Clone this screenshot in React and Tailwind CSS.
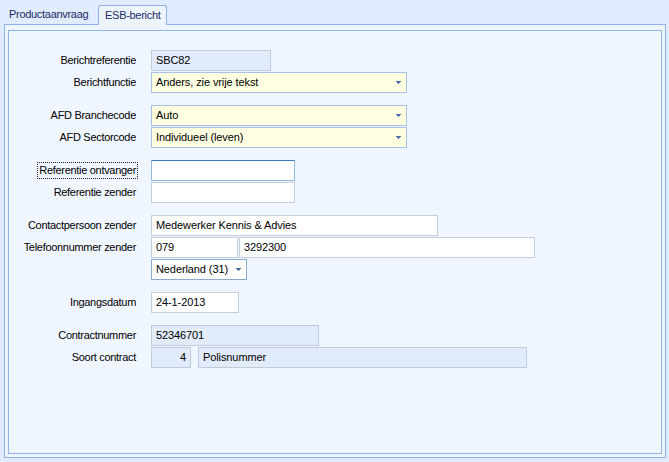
import React from 'react';

const font = { fontFamily: '"Liberation Sans", Arial, sans-serif' };

// small blue dropdown triangle
const Arrow = () => (
  <svg width="5" height="4" viewBox="0 0 5 4" className="shrink-0">
    <path d="M0 0h5v1H0zM1 1h3v1H1zM2 2h1v1H2z" fill="#4c6cab" />
  </svg>
);

const Field = ({ w, kind = 'normal', children, right = false }) => {
  const styles = {
    normal: 'bg-white border-[#c5ced9]',
    focus: 'bg-white border-[#93b8e2] border-t-[#3e78b6]',
    readonly: 'bg-[#e1ebfb] border-[#c2ccd8]',
    combo: 'bg-[#ffffe1] border-[#a9c1e6]',
    combo2: 'bg-white border-[#8ea9cf]',
  };
  const isCombo = kind === 'combo' || kind === 'combo2';
  return (
    <div
      className={`h-[21px] border flex items-center px-[4px] text-[11px] tracking-[-0.1px] text-black whitespace-nowrap ${styles[kind]} ${
        right ? 'justify-end' : ''
      } ${isCombo ? 'justify-between pr-[5px]' : ''}`}
      style={{ width: w }}
    >
      <span>{children}</span>
      {isCombo && <Arrow />}
    </div>
  );
};

const Row = ({ label, children, gap = false, dotted = false }) => (
  <div className={`flex items-center ${gap ? 'mt-[12px]' : 'mt-[1px]'}`}>
    <div className="w-[129px] flex justify-end text-[11px] text-black whitespace-nowrap">
      {label && (
        <span
          className={`leading-[15px] px-[1px] border ${
            dotted ? 'border-dotted border-[#222]' : 'border-transparent'
          }`}
        >
          {label}
        </span>
      )}
    </div>
    <div className="ml-[13px] flex items-center">{children}</div>
  </div>
);

export default function App() {
  return (
    <div
      className="w-[669px] h-[462px] bg-[#e0ebfd] relative overflow-hidden tracking-[-0.3px]"
      style={font}
    >
      {/* tabs */}
      <div className="h-[24px] flex items-end pl-[9px]">
        <div className="h-[19px] flex items-center pr-[10px] text-[11px] text-[#1b2c66]">
          Productaanvraag
        </div>
        <div className="h-[20px] w-[69px] -mb-[1px] relative z-10 border border-b-0 border-[#8fb3e6] rounded-t-[3px] bg-[#eef4fe] flex items-center justify-center text-[11px] text-[#1b2c66]">
          ESB-bericht
        </div>
      </div>

      {/* panel */}
      <div className="ml-[4px] w-[662px] h-[434px] border border-[#8fb3e6] bg-[#eef4fd] pt-[5px] px-[3px] pb-[3px]">
        <div className="w-full h-full border border-[#90b4e6] bg-[#f0f6ff] pt-[18px]">
          <Row label="Berichtreferentie">
            <Field w={120} kind="readonly">SBC82</Field>
          </Row>
          <Row label="Berichtfunctie">
            <Field w={256} kind="combo">Anders, zie vrije tekst</Field>
          </Row>

          <Row label="AFD Branchecode" gap>
            <Field w={256} kind="combo">Auto</Field>
          </Row>
          <Row label="AFD Sectorcode">
            <Field w={256} kind="combo">Individueel (leven)</Field>
          </Row>

          <Row label="Referentie ontvanger" gap dotted>
            <Field w={144} kind="focus" />
          </Row>
          <Row label="Referentie zender">
            <Field w={144} />
          </Row>

          <Row label="Contactpersoon zender" gap>
            <Field w={287}>Medewerker Kennis &amp; Advies</Field>
          </Row>
          <Row label="Telefoonnummer zender">
            <Field w={87}>079</Field>
            <div className="ml-[1px]">
              <Field w={296}>3292300</Field>
            </div>
          </Row>
          <Row label="">
            <Field w={96} kind="combo2">Nederland (31)</Field>
          </Row>

          <Row label="Ingangsdatum" gap>
            <Field w={88}>24-1-2013</Field>
          </Row>

          <Row label="Contractnummer" gap>
            <Field w={168} kind="readonly">52346701</Field>
          </Row>
          <Row label="Soort contract">
            <Field w={40} kind="readonly" right>4</Field>
            <div className="ml-[7px]">
              <Field w={329} kind="readonly">Polisnummer</Field>
            </div>
          </Row>
        </div>
      </div>
    </div>
  );
}
